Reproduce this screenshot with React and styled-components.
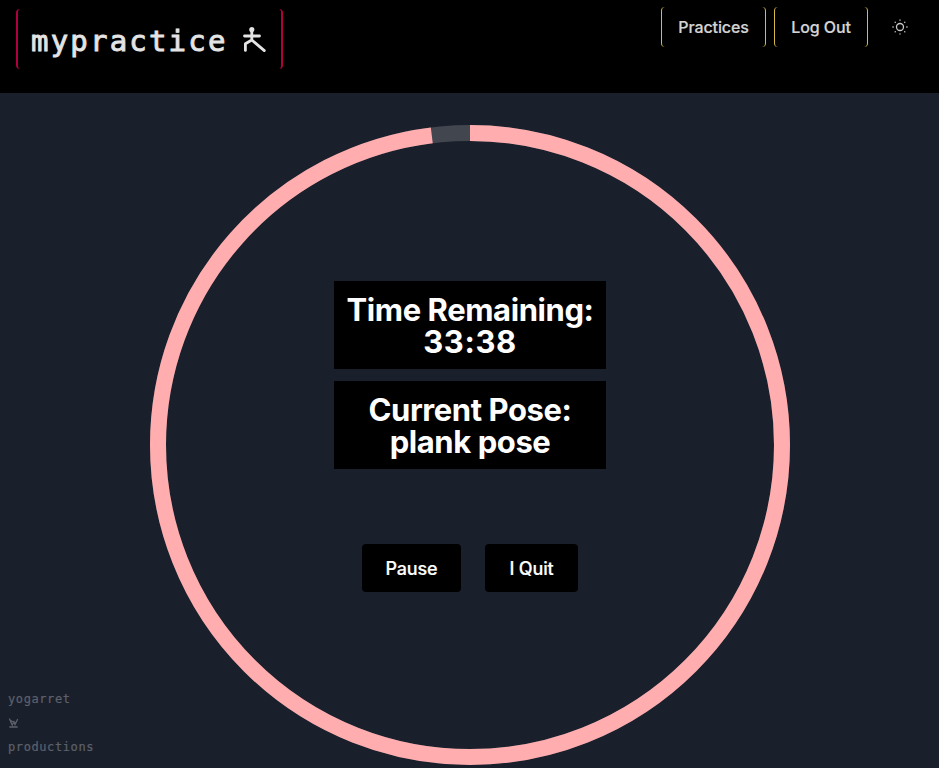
import React from 'react';
import styled, { createGlobalStyle } from 'styled-components';

const Global = createGlobalStyle`
  *, *::before, *::after { box-sizing: border-box; }
  body { margin: 0; background: #1a1f2c; font-family: Inter, sans-serif; color: #fff; overflow: hidden; }
  button { font: inherit; color: inherit; border: 0; background: none; padding: 0; }
`;

const Page = styled.div`
  height: 768px;
  overflow: hidden;
  position: relative;
`;

const Header = styled.header`
  display: flex;
  justify-content: space-between;
  align-items: flex-start;
  height: 93px;
  padding: 7px 16px 0;
  background: #000;
`;

const Logo = styled.h1`
  display: flex;
  align-items: center;
  width: 267px;
  height: 60px;
  margin: 2px 0 0;
  padding: 0 14px 0 13px;
  border: solid #b00040;
  border-width: 0 2px;
  border-radius: 4px;
  color: #e4e4e4;
`;

const Wordmark = styled.span`
  flex: 1;
  padding-top: 3px;
  font: 400 29px/60px 'DejaVu Sans Mono', monospace;
  letter-spacing: 2.2px;
  white-space: nowrap;
  -webkit-text-stroke: 0.9px #e4e4e4;
`;

const Figure = styled.svg`
  flex: none;
  width: 26px;
  height: 28px;
  fill: none;
  stroke: #e4e4e4;
  stroke-width: 2.8;
  stroke-linecap: round;
  stroke-linejoin: round;
`;

const Nav = styled.nav`
  display: flex;
  gap: 8px;
`;

const NavButton = styled.button`
  width: ${(p) => p.$width}px;
  height: 40px;
  border: solid #d6bc45;
  border-width: 0 1px;
  border-radius: 4px;
  font-size: 16px;
  font-weight: 500;
  letter-spacing: -0.1px;
  color: #d4d4d4;
  -webkit-text-stroke: 0.2px #d4d4d4;
`;

const ThemeButton = styled.button`
  display: grid;
  place-items: center;
  width: 40px;
  height: 40px;
  margin: 0 3px 0 4px;
`;

const Main = styled.main`
  display: grid;
  justify-content: center;
  padding: 32px 0 0 1px;
`;

const Timer = styled.section`
  display: grid;
  width: 640px;
  height: 640px;
  > * { grid-area: 1 / 1; }
`;

const Ring = styled.svg`
  width: 640px;
  height: 640px;
  fill: none;
  stroke-width: 16;
`;

const Content = styled.div`
  display: flex;
  flex-direction: column;
  align-items: center;
  gap: 12px;
  padding-top: 156px;
`;

const Panel = styled.h2`
  width: 272px;
  height: 88px;
  margin: 0;
  padding: 13px 0 0;
  background: #000;
  text-align: center;
  font-size: 31px;
  font-weight: 700;
  line-height: 32px;
`;

const PanelLine = styled.span`
  display: block;
  height: 32px;
  white-space: nowrap;
  letter-spacing: ${(p) => p.$tracking}px;
`;

const Actions = styled.div`
  display: flex;
  gap: 24px;
  margin-top: 63px;
`;

const Action = styled.button`
  width: ${(p) => p.$width}px;
  height: 48px;
  border-radius: 4px;
  background: #000;
  font-size: 18px;
  font-weight: 500;
  letter-spacing: -0.15px;
  -webkit-text-stroke: 0.2px #fff;
`;

const Credit = styled.footer`
  position: absolute;
  left: 8px;
  top: 687px;
  color: #5c616b;
  font: 400 12px/24px 'DejaVu Sans Mono', monospace;
  letter-spacing: 0.6px;
  -webkit-text-stroke: 0.2px #5c616b;
`;

const CreditLine = styled.div`
  height: 24px;
`;

const Mark = styled.svg`
  display: block;
  width: 11px;
  height: 24px;
  fill: none;
  stroke: #5c616b;
  stroke-width: 1.3;
  stroke-linecap: round;
`;

const RADIUS = 312;
const LENGTH = 2 * Math.PI * RADIUS;
const PROGRESS = 352.8 / 360;

export default function App() {
  return (
    <Page>
      <Global />
      <Header>
        <Logo>
          <Wordmark>mypractice</Wordmark>
          <Figure viewBox="0 0 26 28">
            <circle cx="10.8" cy="4.6" r="1.2" fill="#e4e4e4" />
            <path d="M10.8 5v10M3.5 11h15M10.8 15L4.4 18.8V25.4M10.8 15L23.3 25.6" />
          </Figure>
        </Logo>
        <Nav>
          <NavButton $width={105}>Practices</NavButton>
          <NavButton $width={94}>Log Out</NavButton>
          <ThemeButton aria-label="Toggle theme">
            <svg width="16" height="16" viewBox="0 0 16 16" fill="none" stroke="#c9c9c9" strokeWidth="1.3" strokeLinecap="round">
              <circle cx="8" cy="8" r="3.5" />
              <path d="M8 .9v.3M8 14.8v.3M.9 8h.3M14.8 8h.3M3.1 3.1l.2.2M12.7 12.7l.2.2M3.1 12.9l.2-.2M12.7 3.3l.2-.2" />
            </svg>
          </ThemeButton>
        </Nav>
      </Header>
      <Main>
        <Timer>
          <Ring viewBox="0 0 640 640">
            <circle cx="320" cy="320" r={RADIUS} stroke="#42464f" />
            <circle
              cx="320"
              cy="320"
              r={RADIUS}
              stroke="#ffadaf"
              strokeDasharray={`${LENGTH * PROGRESS} ${LENGTH}`}
              transform="rotate(-90 320 320)"
            />
          </Ring>
          <Content>
            <Panel>
              <PanelLine $tracking={-0.42}>Time Remaining:</PanelLine>
              <PanelLine $tracking={0.6}>33:38</PanelLine>
            </Panel>
            <Panel>
              <PanelLine $tracking={-0.42}>Current Pose:</PanelLine>
              <PanelLine $tracking={-0.42}>plank pose</PanelLine>
            </Panel>
            <Actions>
              <Action $width={99}>Pause</Action>
              <Action $width={93}>I Quit</Action>
            </Actions>
          </Content>
        </Timer>
      </Main>
      <Credit>
        <CreditLine>yogarret</CreditLine>
        <Mark viewBox="0 0 11 24">
          <path d="M1.5 8L4.2 14L6 10.8L7 13.5L9.5 8.5M2 9L7.5 12.5M1.8 16h7.4" />
        </Mark>
        <CreditLine>productions</CreditLine>
      </Credit>
    </Page>
  );
}
